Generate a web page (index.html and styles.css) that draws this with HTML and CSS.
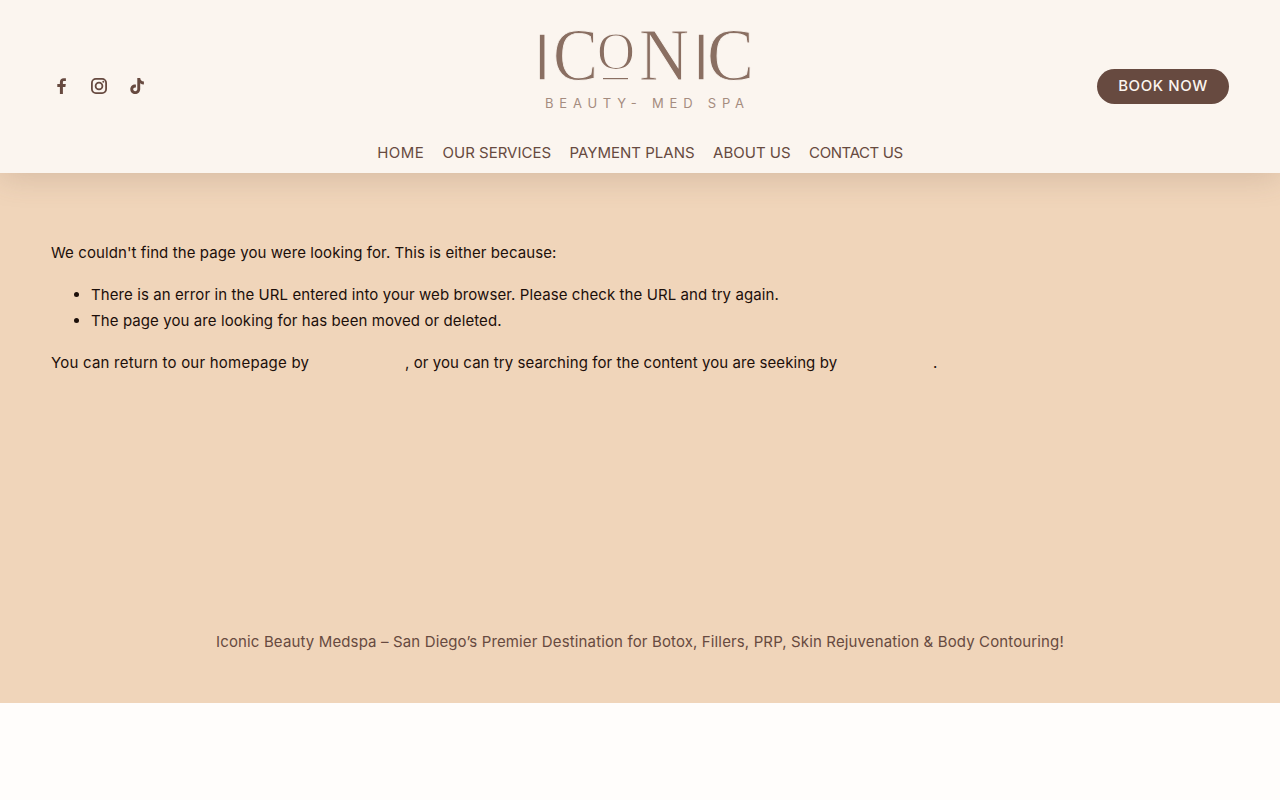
FILE: index.html
```html
<!DOCTYPE html>
<html lang="en">
<head>
<meta charset="utf-8">
<title>Iconic Beauty Med Spa</title>
<link rel="stylesheet" href="styles.css">
</head>
<body>
<header class="site-header">
  <div class="top-row">
    <div class="socials">
      <a class="social" href="#" aria-label="Facebook">
        <svg viewBox="0 0 20 20" width="20" height="20"><path d="M11.900 18v-7.100h2.500l.4-2.900h-2.900V6.300c0-.8.3-1.300 1.400-1.300h1.600V2.300c-.3 0-1.200-.1-2.200-.1-2.300 0-3.800 1.300-3.800 3.800V8H6.300v2.900h2.600V18z"/></svg>
      </a>
      <a class="social" href="#" aria-label="Instagram">
        <svg viewBox="0 0 20 20" width="20" height="20"><rect x="2.900" y="2.900" width="14.200" height="14.200" rx="4" class="line"/><circle cx="10" cy="10" r="3.400" class="line"/><circle cx="14.300" cy="5.700" r="1"/></svg>
      </a>
      <a class="social" href="#" aria-label="TikTok">
        <svg viewBox="0 0 20 20" width="20" height="20"><path d="M10.300 2h2.900c.2 2 1.500 3.400 3.700 3.600v2.900c-1.400 0-2.700-.4-3.700-1.200v5.700c0 3.100-2.300 5-5 5-2.800 0-4.900-2.100-4.900-4.800 0-3 2.600-5.200 5.600-4.700v3c-1.500-.4-2.700.5-2.700 1.800 0 1.100.9 1.900 2 1.900 1.300 0 2.100-.9 2.100-2.200z"/></svg>
      </a>
    </div>
    <a class="logo" href="#" aria-label="Iconic Beauty Med Spa">
      <svg viewBox="0 0 226 82" width="226" height="82">
        <text class="logo-i" x="6" y="50">I</text>
        <text class="logo-big" x="26" y="50" textLength="45" lengthAdjust="spacingAndGlyphs">C</text>
        <text class="logo-o" x="70" y="39" textLength="38" lengthAdjust="spacingAndGlyphs">O</text>
        <rect class="logo-bar" x="76" y="48" width="25" height="1.200"/>
        <text class="logo-big" x="112" y="50" textLength="50" lengthAdjust="spacingAndGlyphs">N</text>
        <text class="logo-i" x="165" y="50">I</text>
        <text class="logo-big" x="180" y="50" textLength="47" lengthAdjust="spacingAndGlyphs">C</text>
        <text class="logo-sub" x="18" y="78" textLength="199">BEAUTY- MED SPA</text>
      </svg>
    </a>
    <div class="cta-wrap"><a class="cta" href="#">BOOK NOW</a></div>
  </div>
  <nav class="nav">
    <a class="nav-wide" href="#">HOME</a>
    <a href="#">OUR SERVICES</a>
    <a href="#">PAYMENT PLANS</a>
    <a href="#">ABOUT US</a>
    <a class="nav-tight" href="#">CONTACT US</a>
  </nav>
</header>
<main class="content">
  <div class="message">
    <p>We couldn't find the page you were looking for. This is either because:</p>
    <ul>
      <li>There is an error in the URL entered into your web browser. Please check the URL and try again.</li>
      <li>The page you are looking for has been moved or deleted.</li>
    </ul>
    <p><span class="lead-in">You can return to our homepage by </span><a class="hidden-link" href="#">clicking here</a><span class="mid-run">, or you can try searching for the content you are seeking by </span><a class="hidden-link" href="#">clicking here</a>.</p>
  </div>
  <p class="tagline">Iconic Beauty Medspa – San Diego’s Premier Destination for Botox, Fillers, PRP, Skin Rejuvenation &amp; Body Contouring!</p>
</main>
<div class="bottom"></div>
</body>
</html>
```
FILE: styles.css
```css
* { box-sizing: border-box; }
html, body { margin: 0; padding: 0; }
body {
  background: #fffdfb;
  font-family: Inter, "Open Sans", sans-serif;
  color: #1c0f0a;
}
a { text-decoration: none; color: inherit; }
.site-header {
  position: relative;
  z-index: 2;
  height: 173px;
  background: #fbf5ef;
  box-shadow: 0 4px 30px rgba(103, 74, 64, 0.2);
  padding: 30px 51px 0;
}
.top-row {
  display: grid;
  grid-template-columns: 1fr auto 1fr;
  height: 82px;
}
.socials { display: flex; gap: 18px; padding-top: 46px; }
.social { display: block; width: 20px; height: 20px; }
.social svg { display: block; fill: #674a40; }
.social .line { fill: none; stroke: #674a40; stroke-width: 1.800; }
.logo { display: block; height: 82px; }
.logo svg { display: block; overflow: visible; }
.logo-big, .logo-o {
  font-family: "Liberation Serif", serif;
  fill: #8a6f62;
  stroke: #fbf5ef;
  stroke-width: 0.900;
}
.logo-big { font-size: 73px; }
.logo-o { font-size: 52px; stroke-width: 1.200; }
.logo-i { font-family: "Liberation Sans", sans-serif; font-size: 66px; fill: #8a6f62; stroke: #fbf5ef; stroke-width: 1.500; }
.logo-bar { fill: #8a6f62; }
.logo-sub { font-family: Inter, sans-serif; font-size: 13px; fill: #a58c7f; }
.cta-wrap { display: flex; justify-content: flex-end; align-items: flex-start; padding-top: 39px; }
.cta {
  display: block;
  width: 132px;
  height: 35px;
  line-height: 34px;
  text-align: center;
  border-radius: 18px;
  background: #674a40;
  color: #fbf5ef;
  font-size: 15px;
  font-weight: 500;
  letter-spacing: 0.6px;
}
.nav {
  display: flex;
  justify-content: center;
  gap: 18.500px;
  margin-top: 31px;
  font-size: 15px;
  line-height: 20px;
  color: #674a40;
}
.nav-wide { letter-spacing: 0.4px; }
.nav-tight { letter-spacing: -0.4px; }
.content {
  height: 530px;
  background: #f0d5ba;
  padding: 67px 51px 0;
  display: flex;
  flex-direction: column;
}
.message { flex: 1; font-size: 15px; line-height: 26px; letter-spacing: 0.09px; }
.message p { margin: 0 0 16px; }
.message ul { margin: 0 0 16px; padding-left: 40px; }
.lead-in { letter-spacing: 0.22px; }
.mid-run { letter-spacing: 0.07px; }
.hidden-link { color: #f0d5ba; }
.tagline {
  margin: 0 0 48px;
  text-align: center;
  font-size: 15px;
  line-height: 26px;
  letter-spacing: 0.135px;
  color: #674a40;
}
.bottom { height: 97px; }
```
